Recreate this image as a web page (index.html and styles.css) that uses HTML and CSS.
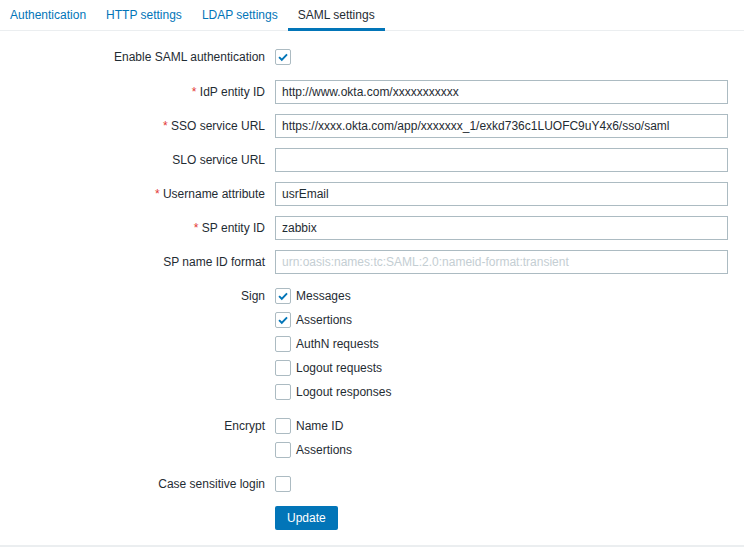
FILE: index.html
```html
<!DOCTYPE html>
<html>
<head>
<meta charset="utf-8">
<link rel="stylesheet" href="styles.css">
</head>
<body>
<div class="page">
  <ul class="tabs">
    <li class="tab">Authentication</li>
    <li class="tab">HTTP settings</li>
    <li class="tab">LDAP settings</li>
    <li class="tab active">SAML settings</li>
  </ul>
  <div class="form">
    <div class="row first">
      <div class="label">Enable SAML authentication</div>
      <div class="field"><span class="cb checked"><svg viewBox="0 0 16 16"><path d="M3.5 8.2 L6.6 11.2 L12.6 5"/></svg></span></div>
    </div>
    <div class="row">
      <div class="label"><span class="req">*</span> IdP entity ID</div>
      <div class="field"><div class="input">http://www.okta.com/xxxxxxxxxxx</div></div>
    </div>
    <div class="row">
      <div class="label"><span class="req">*</span> SSO service URL</div>
      <div class="field"><div class="input">https://xxxx.okta.com/app/xxxxxxx_1/exkd736c1LUOFC9uY4x6/sso/saml</div></div>
    </div>
    <div class="row">
      <div class="label">SLO service URL</div>
      <div class="field"><div class="input"></div></div>
    </div>
    <div class="row">
      <div class="label"><span class="req">*</span> Username attribute</div>
      <div class="field"><div class="input">usrEmail</div></div>
    </div>
    <div class="row">
      <div class="label"><span class="req">*</span> SP entity ID</div>
      <div class="field"><div class="input">zabbix</div></div>
    </div>
    <div class="row">
      <div class="label">SP name ID format</div>
      <div class="field"><div class="input placeholder">urn:oasis:names:tc:SAML:2.0:nameid-format:transient</div></div>
    </div>
    <div class="row">
      <div class="label">Sign</div>
      <div class="field list">
        <div class="item"><span class="cb checked"><svg viewBox="0 0 16 16"><path d="M3.5 8.2 L6.6 11.2 L12.6 5"/></svg></span><span class="cbl">Messages</span></div>
        <div class="item"><span class="cb checked"><svg viewBox="0 0 16 16"><path d="M3.5 8.2 L6.6 11.2 L12.6 5"/></svg></span><span class="cbl">Assertions</span></div>
        <div class="item"><span class="cb"></span><span class="cbl">AuthN requests</span></div>
        <div class="item"><span class="cb"></span><span class="cbl">Logout requests</span></div>
        <div class="item"><span class="cb"></span><span class="cbl">Logout responses</span></div>
      </div>
    </div>
    <div class="row">
      <div class="label">Encrypt</div>
      <div class="field list">
        <div class="item"><span class="cb"></span><span class="cbl">Name ID</span></div>
        <div class="item"><span class="cb"></span><span class="cbl">Assertions</span></div>
      </div>
    </div>
    <div class="row">
      <div class="label">Case sensitive login</div>
      <div class="field"><span class="cb"></span></div>
    </div>
    <div class="row">
      <div class="label"></div>
      <div class="field"><button class="btn">Update</button></div>
    </div>
  </div>
</div>
</body>
</html>
```
FILE: styles.css
```css
html, body {
  margin: 0;
  padding: 0;
  background: #ffffff;
}
body {
  font-family: "Liberation Sans", Arial, sans-serif;
  font-size: 12px;
  color: #1f2c33;
}
.page {
  width: 744px;
}
.tabs {
  list-style: none;
  margin: 0;
  padding: 0;
  display: flex;
  height: 30px;
  border-bottom: 1px solid #ebeef0;
}
.tab {
  padding: 0 10px;
  line-height: 30px;
  height: 28px;
  color: #0275b8;
  border-bottom: 3px solid transparent;
}
.tab.active {
  color: #1f2c33;
  border-bottom-color: #0275b8;
}
.form {
  padding: 14px 16px 15px 0;
  display: flex;
  flex-direction: column;
  gap: 10px;
  border-bottom: 2px solid #ebeef0;
}
.row {
  display: grid;
  grid-template-columns: 265px 1fr;
  column-gap: 10px;
}
.row.first {
  margin-bottom: 1px;
}
.label {
  text-align: right;
  line-height: 24px;
  height: 24px;
  white-space: nowrap;
}
.req {
  color: #e33734;
}
.field {
  display: flex;
  align-items: center;
  min-height: 24px;
}
.field.list {
  flex-direction: column;
  align-items: flex-start;
}
.item {
  display: flex;
  align-items: center;
  height: 24px;
}
.input {
  box-sizing: border-box;
  width: 100%;
  height: 24px;
  border: 1px solid #acbbc2;
  padding: 0 6px;
  line-height: 22px;
  white-space: nowrap;
  overflow: hidden;
}
.input.placeholder {
  color: #c4ced3;
}
.cb {
  box-sizing: border-box;
  width: 16px;
  height: 16px;
  border: 1px solid #acbbc2;
  border-radius: 2px;
  background: #fff;
  display: inline-flex;
  align-items: center;
  justify-content: center;
}
.cb svg {
  width: 14px;
  height: 14px;
  fill: none;
  stroke: #0275b8;
  stroke-width: 2.2;
}
.cbl {
  margin-left: 5px;
}
.btn {
  font-family: "Liberation Sans", Arial, sans-serif;
  font-size: 12px;
  height: 24px;
  padding: 0 12px;
  border: 0;
  border-radius: 2px;
  background: #0275b8;
  color: #ffffff;
}
```
